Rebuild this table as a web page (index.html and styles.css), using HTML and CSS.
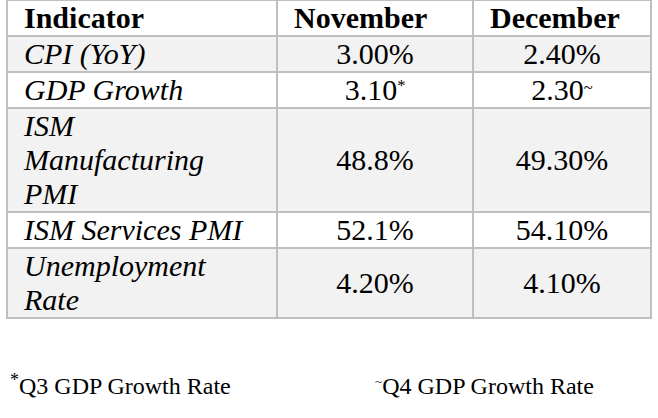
FILE: index.html
```html
<!DOCTYPE html>
<html lang="en">
<head>
<meta charset="utf-8">
<title>Economic Indicators</title>
<link rel="stylesheet" href="styles.css">
</head>
<body>
<table class="indicators">
  <colgroup>
    <col class="col-name">
    <col class="col-nov">
    <col class="col-dec">
  </colgroup>
  <thead>
    <tr>
      <th>Indicator</th>
      <th>November</th>
      <th>December</th>
    </tr>
  </thead>
  <tbody>
    <tr class="shade">
      <td class="name">CPI (YoY)</td>
      <td class="val">3.00%</td>
      <td class="val">2.40%</td>
    </tr>
    <tr>
      <td class="name">GDP Growth</td>
      <td class="val">3.10<sup class="mark star">*</sup></td>
      <td class="val">2.30<sup class="mark tilde">~</sup></td>
    </tr>
    <tr class="shade">
      <td class="name">ISM<br>Manufacturing<br>PMI</td>
      <td class="val">48.8%</td>
      <td class="val">49.30%</td>
    </tr>
    <tr>
      <td class="name">ISM Services PMI</td>
      <td class="val">52.1%</td>
      <td class="val">54.10%</td>
    </tr>
    <tr class="shade">
      <td class="name">Unemployment<br>Rate</td>
      <td class="val">4.20%</td>
      <td class="val">4.10%</td>
    </tr>
  </tbody>
</table>
<div class="notes">
  <p class="note"><sup class="fn star">*</sup>Q3 GDP Growth Rate</p>
  <p class="note"><sup class="fn tilde">~</sup>Q4 GDP Growth Rate</p>
</div>
</body>
</html>
```

FILE: styles.css
```css
html, body {
  margin: 0;
  padding: 0;
  background: #ffffff;
}

body {
  font-family: Tinos, "Liberation Serif", "Times New Roman", serif;
  color: #000000;
}

.indicators {
  border-collapse: collapse;
  table-layout: fixed;
  width: 644px;
  margin: -1px 0 0 6px;
  font-size: 30px;
  line-height: 34px;
}

.col-name { width: 270px; }
.col-nov { width: 196px; }
.col-dec { width: 178px; }

.indicators th,
.indicators td {
  border: 2px solid #bfbfbf;
  padding: 0 0 0 16px;
  vertical-align: middle;
}

.indicators th {
  font-weight: bold;
  text-align: left;
  padding-left: 16px;
}

.indicators tr {
  background: #ffffff;
}

.indicators tr.shade {
  background: #f2f2f2;
}

.indicators td.name {
  font-style: italic;
  text-align: left;
  padding-left: 16px;
}

.indicators td.val {
  text-align: center;
  padding: 0;
}

.mark {
  line-height: 0;
  font-size: 55%;
  vertical-align: 0.55em;
}

.mark.tilde {
  vertical-align: 0.4em;
}

.notes {
  display: flex;
  margin-top: 53px;
  padding-left: 10px;
}

.note {
  margin: 0;
  font-size: 24px;
  line-height: 28px;
}

.note:first-child {
  width: 365px;
}

.fn {
  line-height: 0;
  font-size: 75%;
  vertical-align: 0.45em;
}

.fn.tilde {
  font-size: 55%;
  vertical-align: 0.6em;
}
```
